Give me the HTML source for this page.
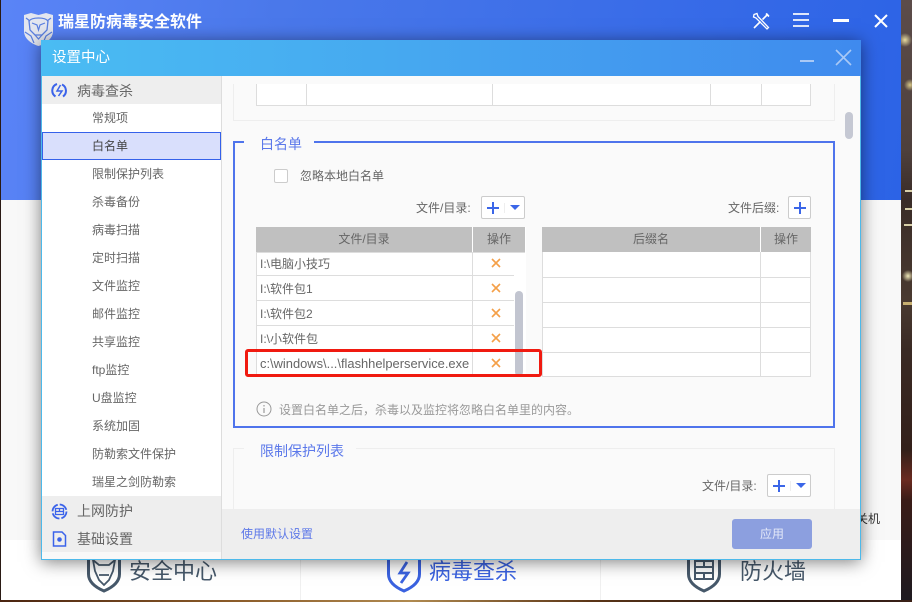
<!DOCTYPE html>
<html lang="zh"><head><meta charset="utf-8"><title>瑞星防病毒安全软件</title>
<style>
*{box-sizing:border-box;margin:0;padding:0}
html,body{width:912px;height:602px;overflow:hidden;background:#2a1a14}
body{position:relative;font-family:"Liberation Sans","Noto Sans CJK SC",sans-serif;font-size:12px;color:#666}
.a{position:absolute}
.t{position:absolute;white-space:nowrap;line-height:16px}
.nav{position:absolute;left:92px;color:#666;font-size:12px;line-height:16px;white-space:nowrap}
.btn{position:absolute;background:#fff;border:1px solid #ccc;border-radius:2px}
.plus{position:absolute;left:5px;top:5px;width:12px;height:12px}
.plus:before{content:"";position:absolute;left:5px;top:0;width:2.4px;height:12px;background:#3b66e8}
.plus:after{content:"";position:absolute;left:0;top:5px;width:12px;height:2.4px;background:#3b66e8}
.h{position:absolute;background:#c0c0c0;text-align:center;line-height:25px;height:25px;color:#666;font-size:12px}
.x{position:absolute;width:12px;height:12px}
</style></head><body>
<!-- photo backdrop -->
<div class="a" style="left:901px;top:0;width:11px;height:602px;background:radial-gradient(circle at 4px 40px,#e8dca0 0,rgba(232,220,160,0) 7px),radial-gradient(circle at 9px 85px,#d8c888 0,rgba(216,200,136,0) 6px),radial-gradient(circle at 7px 276px,#f0e8b8 0,rgba(240,232,184,0) 6px),linear-gradient(180deg,#5c4c4a 0,#4e403c 150px,#3a2c28 200px,#4a3a30 300px,#3a2a24 350px,#33201a 450px,#6a2a20 480px,#3a1c18 500px,#1e1a20 602px)"></div>
<div class="a" style="left:905px;top:190px;width:7px;height:2px;background:#d8cfa8"></div>
<div class="a" style="left:905px;top:208px;width:7px;height:2px;background:#d8cfa8"></div>
<div class="a" style="left:904px;top:224px;width:8px;height:2px;background:#d8cfa8"></div>
<div class="a" style="left:903px;top:302px;width:9px;height:3px;background:#c8b070"></div>
<div class="a" style="left:0;top:0;width:1px;height:602px;background:#2a1a14"></div>
<div class="a" style="left:0;top:600px;width:912px;height:2px;background:linear-gradient(90deg,#4a2410,#8a5a28 25%,#b08a50 45%,#5a3416 65%,#2b1a14 85%,#3a2016)"></div>
<!-- main app -->
<div class="a" style="left:1px;top:0;width:900px;height:200px;background:linear-gradient(100deg,#5a84f7 0,#4a78ea 30%,#2c63e6 100%)"></div>
<div class="a" style="left:1px;top:200px;width:900px;height:340px;background:#f8f8f8"></div>
<div class="a" style="left:1px;top:540px;width:900px;height:60px;background:#fff"></div>
<div class="a" style="left:300px;top:540px;width:1px;height:60px;background:#f0f0f0"></div>
<div class="a" style="left:600px;top:540px;width:1px;height:60px;background:#f0f0f0"></div>
<svg class="a" style="left:23px;top:12px" width="31" height="35" viewBox="0 0 31 35"><path d="M1 3 8 1 15.500 3 23 1 30 3V19C30 27 22 32 15.500 34 9 32 1 27 1 19Z" fill="#e3e6ef"/><path d="M6 9C9 5 22 5 25 9L24 18 19 23H12L7 18Z" fill="none" stroke="#5a7fe0" stroke-width="1.300"/><path d="M9 11 14 13 15.500 18 17 13 22 11M12 23 15.500 27 19 23M2 20 8 24 11 31M29 20 23 24 20 31M3 6 7 9M28 6 24 9" stroke="#5a7fe0" stroke-width="1.200" fill="none"/></svg>
<div class="t" style="left:58px;top:14px;font-size:16px;line-height:18px;color:#fff;font-weight:bold">瑞星防病毒安全软件</div>
<svg class="a" style="left:752px;top:12px" width="18" height="18" viewBox="0 0 18 18" fill="none" stroke="#fff" stroke-width="1.600"><path d="M16 2 10.500 7.500M14 1.500 17 4.500M2 16 8.500 9.500"/><path d="M2 2.500 5 1.500 6 4.500 16.500 15.500 15 17 4 6 1.500 5Z" stroke-width="1.300"/></svg>
<div class="a" style="left:793px;top:13px;width:16px;height:2px;background:#dfe7fb"></div>
<div class="a" style="left:793px;top:19px;width:16px;height:2px;background:#dfe7fb"></div>
<div class="a" style="left:793px;top:25px;width:16px;height:2px;background:#dfe7fb"></div>
<div class="a" style="left:833px;top:19px;width:16px;height:2.500px;background:#fff"></div>
<svg class="a" style="left:874px;top:14px" width="14" height="14" viewBox="0 0 14 14"><path d="M1 1 13 13M13 1 1 13" stroke="#fff" stroke-width="2"/></svg>
<!-- bottom nav -->
<svg class="a" style="left:86px;top:549px" width="36" height="46" viewBox="0 0 36 46" fill="none" stroke="#46586a" stroke-width="3"><path d="M2.500 5V25C2.500 34 11 39 18 42 25 39 33.500 34 33.500 25V5"/><path d="M7 11 13 16H23L29 11 27 22 23 31 18 36 13 31 9 22ZM13 26H23" stroke-width="1.800"/></svg>
<div class="t" style="left:129px;top:559px;font-size:22px;line-height:26px;color:#46586a">安全中心</div>
<svg class="a" style="left:386px;top:549px" width="36" height="46" viewBox="0 0 36 46" fill="none" stroke="#3a62e0" stroke-width="3"><path d="M2.500 5V25C2.500 34 11 39 18 42 25 39 33.500 34 33.500 25V5"/><path d="M21 13 14 24H22L15 34" stroke-width="2.800"/></svg>
<div class="t" style="left:429px;top:559px;font-size:22px;line-height:26px;color:#3a62e0">病毒查杀</div>
<svg class="a" style="left:686px;top:549px" width="36" height="46" viewBox="0 0 36 46" fill="none" stroke="#46586a" stroke-width="3"><path d="M2.500 5V25C2.500 34 11 39 18 42 25 39 33.500 34 33.500 25V5"/><path d="M9 12H27V30H9ZM9 18H27M9 24H27M18 12V18M18 24V30" stroke-width="2"/></svg>
<div class="t" style="left:740px;top:559px;font-size:22px;line-height:26px;color:#46586a">防火墙</div>
<div class="t" style="left:856px;top:511px;color:#333">关机</div>
<!-- dialog -->
<div class="a" style="left:41px;top:40px;width:820px;height:520px;background:#fafafa;border:1px solid #4db9ea;box-shadow:0 2px 16px rgba(0,0,0,.5)"></div>
<div class="a" style="left:41px;top:40px;width:820px;height:36px;background:linear-gradient(90deg,#4abcf3 0,#46a8f0 45%,#3f8aee 100%)"></div>
<div class="t" style="left:52px;top:49px;font-size:14.500px;line-height:18px;color:#fff">设置中心</div>
<div class="a" style="left:800px;top:60px;width:14px;height:2px;background:#a9c9f6"></div>
<svg class="a" style="left:835px;top:49px" width="17" height="17" viewBox="0 0 17 17"><path d="M1 1 16 16M16 1 1 16" stroke="#a9c9f6" stroke-width="1.600"/></svg>
<!-- sidebar -->
<div class="a" style="left:42px;top:76px;width:179px;height:483px;background:#fff"></div>
<div class="a" style="left:221px;top:76px;width:1px;height:483px;background:#ddd"></div>
<div class="a" style="left:42px;top:76px;width:179px;height:28px;background:#eee"></div>
<svg class="a" style="left:51px;top:82px" width="17" height="17" viewBox="0 0 17 17" fill="none" stroke="#3b63ea" stroke-width="2"><path d="M6 2A7 7 0 0 0 4.500 14.500M11 2.500A7 7 0 0 1 12 14.500"/><path d="M9.500 3 6 9H11L7.500 14" stroke-width="1.500"/></svg>
<div class="t" style="left:77px;top:83px;font-size:14px;color:#666">病毒查杀</div>
<div class="a" style="left:42px;top:132px;width:179px;height:28px;background:#d9dffc;border:1px solid #3561ea"></div>
<div class="nav" style="top:110px">常规项</div>
<div class="nav" style="top:138px;color:#444">白名单</div>
<div class="nav" style="top:166px">限制保护列表</div>
<div class="nav" style="top:194px">杀毒备份</div>
<div class="nav" style="top:222px">病毒扫描</div>
<div class="nav" style="top:250px">定时扫描</div>
<div class="nav" style="top:278px">文件监控</div>
<div class="nav" style="top:306px">邮件监控</div>
<div class="nav" style="top:334px">共享监控</div>
<div class="nav" style="top:362px">ftp监控</div>
<div class="nav" style="top:390px">U盘监控</div>
<div class="nav" style="top:418px">系统加固</div>
<div class="nav" style="top:446px">防勒索文件保护</div>
<div class="nav" style="top:474px">瑞星之剑防勒索</div>
<div class="a" style="left:42px;top:496px;width:179px;height:56px;background:#eee"></div>
<div class="a" style="left:42px;top:552px;width:179px;height:7px;background:#f8f8f8"></div>
<svg class="a" style="left:51px;top:503px" width="17" height="17" viewBox="0 0 17 17" fill="none" stroke="#3b63ea"><circle cx="8.500" cy="8.500" r="7" stroke-width="1.800" stroke-dasharray="9 2"/><path d="M4.500 5.500H12.500V11.500H4.500ZM4.500 8.500H12.500M8.500 5.500V8.500" stroke-width="1.300"/></svg>
<div class="t" style="left:77px;top:503px;font-size:14px;color:#666">上网防护</div>
<svg class="a" style="left:52px;top:531px" width="15" height="16" viewBox="0 0 15 16" fill="none" stroke="#3b63ea" stroke-width="1.500"><path d="M1.500 1H10L13.500 4.500V15H1.500Z"/><circle cx="7.500" cy="8.500" r="1.800" fill="#3b63ea" stroke-width="1"/></svg>
<div class="t" style="left:77px;top:531px;font-size:14px;color:#666">基础设置</div>
<!-- previous section remains -->
<div class="a" style="left:233px;top:84px;width:602px;height:37px;border:1px solid #eee;border-top:0"></div>
<div class="a" style="left:256px;top:84px;width:555px;height:22px;background:#fff;border:1px solid #ddd;border-top:0"></div>
<div class="a" style="left:306px;top:84px;width:1px;height:21px;background:#ddd"></div>
<div class="a" style="left:492px;top:84px;width:1px;height:21px;background:#ddd"></div>
<div class="a" style="left:710px;top:84px;width:1px;height:21px;background:#ddd"></div>
<div class="a" style="left:761px;top:84px;width:1px;height:21px;background:#ddd"></div>
<div class="a" style="left:845px;top:112px;width:8px;height:27px;border-radius:4px;background:#c5c8d3"></div>
<!-- whitelist section -->
<div class="a" style="left:233px;top:141px;width:602px;height:287px;border:2px solid #4f74ec"></div>
<div class="a" style="left:244px;top:139px;width:70px;height:6px;background:#fafafa"></div>
<div class="t" style="left:260px;top:136px;font-size:14px;color:#5b78ea">白名单</div>
<div class="a" style="left:274px;top:169px;width:14px;height:14px;background:#fff;border:1px solid #ccc;border-radius:2px"></div>
<div class="t" style="left:300px;top:168px;color:#666">忽略本地白名单</div>
<div class="t" style="left:416px;top:200px;color:#666">文件/目录:</div>
<div class="btn" style="left:481px;top:196px;width:44px;height:23px"><div class="plus"></div><div class="a" style="left:22px;top:6px;width:1px;height:10px;background:#eee"></div><div class="a" style="left:28px;top:8px;width:0;height:0;border:4px solid transparent;border-top:5px solid #3b66e8;border-left-width:5px;border-right-width:5px"></div></div>
<div class="t" style="left:728px;top:200px;color:#666">文件后缀:</div>
<div class="btn" style="left:788px;top:196px;width:23px;height:23px"><div class="plus"></div></div>
<!-- left table -->
<div class="a" style="left:256px;top:227px;width:270px;height:150px;background:#fff"></div>
<div class="h" style="left:256px;top:227px;width:216px">文件/目录</div>
<div class="h" style="left:473px;top:227px;width:52px">操作</div>
<div class="a" style="left:256px;top:252px;width:1px;height:124px;background:#ddd"></div>
<div class="a" style="left:472px;top:252px;width:1px;height:124px;background:#ddd"></div>
<div class="a" style="left:256px;top:252px;width:269px;height:1px;background:#ddd"></div>
<div class="a" style="left:256px;top:275px;width:258px;height:1px;background:#ddd"></div>
<div class="a" style="left:256px;top:300px;width:258px;height:1px;background:#ddd"></div>
<div class="a" style="left:256px;top:325px;width:258px;height:1px;background:#ddd"></div>
<div class="a" style="left:256px;top:350px;width:258px;height:1px;background:#ddd"></div>
<div class="a" style="left:256px;top:375px;width:258px;height:1px;background:#ddd"></div>
<div class="t" style="left:260px;top:256px">I:\电脑小技巧</div>
<div class="t" style="left:260px;top:281px">I:\软件包1</div>
<div class="t" style="left:260px;top:306px">I:\软件包2</div>
<div class="t" style="left:260px;top:331px">I:\小软件包</div>
<div class="t" style="left:260px;top:356px;font-size:12.900px">c:\windows\...\flashhelperservice.exe</div>
<svg class="x" style="left:490px;top:257px" viewBox="0 0 12 12"><path d="M2 2 10 10M10 2 2 10" stroke="#f4a048" stroke-width="1.600"/></svg>
<svg class="x" style="left:490px;top:282px" viewBox="0 0 12 12"><path d="M2 2 10 10M10 2 2 10" stroke="#f4a048" stroke-width="1.600"/></svg>
<svg class="x" style="left:490px;top:307px" viewBox="0 0 12 12"><path d="M2 2 10 10M10 2 2 10" stroke="#f4a048" stroke-width="1.600"/></svg>
<svg class="x" style="left:490px;top:332px" viewBox="0 0 12 12"><path d="M2 2 10 10M10 2 2 10" stroke="#f4a048" stroke-width="1.600"/></svg>
<svg class="x" style="left:490px;top:357px" viewBox="0 0 12 12"><path d="M2 2 10 10M10 2 2 10" stroke="#f4a048" stroke-width="1.600"/></svg>
<div class="a" style="left:515px;top:291px;width:8px;height:85px;border-radius:4px;background:#c2c5d0"></div>
<!-- right table -->
<div class="a" style="left:542px;top:227px;width:269px;height:150px;background:#fff;border:1px solid #ddd;border-top:0"></div>
<div class="h" style="left:542px;top:227px;width:218px">后缀名</div>
<div class="h" style="left:761px;top:227px;width:50px">操作</div>
<div class="a" style="left:760px;top:252px;width:1px;height:124px;background:#ddd"></div>
<div class="a" style="left:542px;top:277px;width:269px;height:1px;background:#ddd"></div>
<div class="a" style="left:542px;top:302px;width:269px;height:1px;background:#ddd"></div>
<div class="a" style="left:542px;top:327px;width:269px;height:1px;background:#ddd"></div>
<div class="a" style="left:542px;top:352px;width:269px;height:1px;background:#ddd"></div>
<!-- red marker -->
<div class="a" style="left:245px;top:349px;width:297px;height:28px;border:3px solid #f01a10;border-radius:3px"></div>
<!-- info -->
<svg class="a" style="left:256px;top:401px" width="16" height="16" viewBox="0 0 16 16" fill="none" stroke="#999"><circle cx="8" cy="8" r="7"/><path d="M8 7V12M8 4V5.500" stroke-width="1.200"/></svg>
<div class="t" style="left:279px;top:402px;color:#999">设置白名单之后，杀毒以及监控将忽略白名单里的内容。</div>
<!-- protected list section -->
<div class="a" style="left:233px;top:448px;width:602px;height:61px;border:1px solid #eee;border-bottom:0"></div>
<div class="a" style="left:244px;top:446px;width:112px;height:5px;background:#fafafa"></div>
<div class="t" style="left:260px;top:443px;font-size:14px;color:#5b78ea">限制保护列表</div>
<div class="t" style="left:702px;top:478px;color:#666">文件/目录:</div>
<div class="btn" style="left:767px;top:474px;width:44px;height:23px"><div class="plus"></div><div class="a" style="left:22px;top:6px;width:1px;height:10px;background:#eee"></div><div class="a" style="left:28px;top:8px;width:0;height:0;border:4px solid transparent;border-top:5px solid #3b66e8;border-left-width:5px;border-right-width:5px"></div></div>
<!-- footer -->
<div class="a" style="left:222px;top:509px;width:638px;height:50px;background:#eee"></div>
<div class="t" style="left:241px;top:526px;color:#5d78e8">使用默认设置</div>
<div class="a" style="left:732px;top:519px;width:80px;height:30px;background:#8c9fdf;border-radius:3px;color:#e4e8f8;text-align:center;line-height:30px;font-size:12px">应用</div>
</body></html>
